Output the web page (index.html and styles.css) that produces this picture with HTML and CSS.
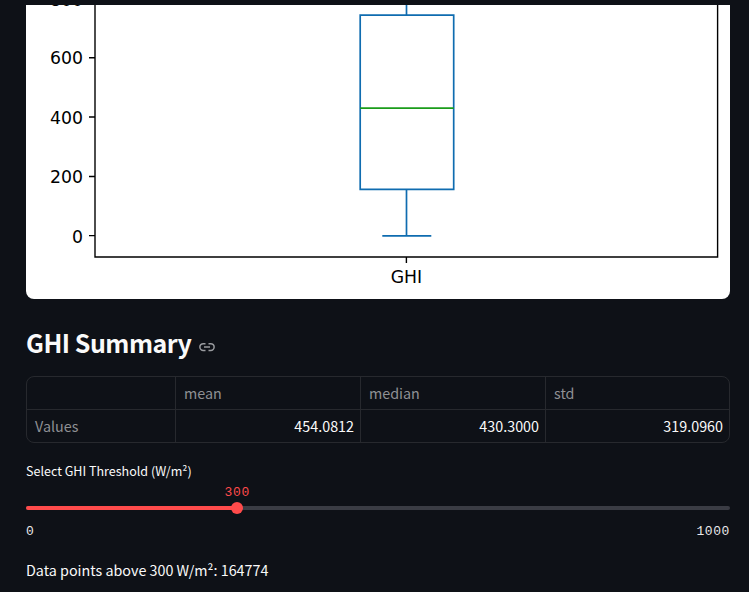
FILE: index.html
```html
<!DOCTYPE html>
<html lang="en">
<head>
<meta charset="utf-8">
<title>GHI Summary</title>
<link rel="stylesheet" href="styles.css">
</head>
<body>
<main class="page">
  <svg class="chart" width="704" height="294" viewBox="26 5 704 294" role="img" aria-label="GHI box plot">
    <rect class="paper" x="26" y="5" width="704" height="294"/>
    <g class="axes">
      <path d="M95 0V257H717.6V0"/>
      <path d="M89 57.7h6M89 117h6M89 176.5h6M89 235.6h6M406.4 257v6"/>
    </g>
    <g class="tick">
      <text x="83" y="5.6">800</text>
      <text x="83" y="64.3">600</text>
      <text x="83" y="123.8">400</text>
      <text x="83" y="183">200</text>
      <text x="83" y="242.5">0</text>
      <text class="category" x="406.4" y="283">GHI</text>
    </g>
    <path class="box" d="M406.5 0V15.2M360.2 15.2H453.7V189.3H360.2ZM406.5 189.3V235.8M382.3 235.8H431.3"/>
    <path class="middle" d="M360.2 108.2H453.7"/>
  </svg>

  <h2 class="title"><span>GHI Summary</span>
    <svg class="link" width="18" height="18" viewBox="0 0 24 24"><path d="M14 7.5h3a4.5 4.5 0 0 1 0 9h-3m-4 0H7a4.5 4.5 0 0 1 0-9h3M8 12h8"/></svg>
  </h2>

  <div class="table">
    <div class="cell"></div><div class="cell">mean</div><div class="cell">median</div><div class="cell">std</div>
    <div class="cell">Values</div><div class="cell value">454.0812</div><div class="cell value">430.3000</div><div class="cell value">319.0960</div>
  </div>

  <p class="label">Select GHI Threshold (W/m²)</p>
  <div class="slider">
    <div class="track"><div class="fill"></div><div class="thumb"><span class="current">300</span></div></div>
    <div class="range"><span>0</span><span>1000</span></div>
  </div>
  <p class="result">Data points above 300 W/m²: 164774</p>
</main>
</body>
</html>
```
FILE: styles.css
```css
* { box-sizing: border-box; }
body {
  margin: 0;
  height: 592px;
  overflow: hidden;
  background: #0e1117;
  color: #fafafa;
  font-family: "Noto Sans CJK SC", "Noto Sans", sans-serif;
}
.page { padding: 5px 19px 0 26px; }
.chart { display: block; border-radius: 0 0 8px 8px; }
.paper { fill: #fff; }
.axes { fill: none; stroke: #000; stroke-width: 1.4; }
.tick { font: 17.3px "DejaVu Sans", sans-serif; text-anchor: end; fill: #000; }
.category { text-anchor: middle; }
.box { fill: none; stroke: #0f6cb0; stroke-width: 1.7; }
.middle { fill: none; stroke: #1a9c1a; stroke-width: 1.7; }
.title {
  display: flex;
  align-items: center;
  gap: 7px;
  height: 34px;
  margin: 26px 0 17px;
  font-size: 25px;
  font-weight: 600;
  line-height: 34px;
  letter-spacing: -0.5px;
}
.link { margin-top: 10px; fill: none; stroke: #9a9ca0; stroke-width: 2; }
.table {
  display: grid;
  grid-template-columns: 149px 185px 185px 1fr;
  grid-template-rows: 33px 32px;
  width: 704px;
  border: 1px solid #27292e;
  border-radius: 8px;
  font-size: 14.33px;
}
.cell {
  padding: 0 8px;
  border-right: 1px solid #27292e;
  line-height: 31px;
  color: #8e9094;
}
.cell:nth-child(-n+4) { border-bottom: 1px solid #27292e; }
.cell:nth-child(4n) { border-right: 0; }
.value { padding-right: 6px; color: #fafafa; text-align: right; }
.label { margin: 18px 0 0; height: 20px; font-size: 12.54px; line-height: 20px; }
.slider { margin-top: 25px; font: 13px/20px "Liberation Mono", monospace; letter-spacing: 0.6px; }
.track { position: relative; height: 4px; border-radius: 2px; background: #3a3c44; }
.fill { width: 30%; height: 4px; border-radius: 2px; background: #ff4b4b; }
.thumb {
  position: absolute;
  top: -4px;
  left: calc(30% - 6px);
  width: 12px;
  height: 12px;
  border-radius: 50%;
  background: #ff4b4b;
}
.current { position: absolute; left: 50%; bottom: 11px; transform: translateX(-50%); color: #ff4b4b; }
.range { display: flex; justify-content: space-between; margin-top: 12px; color: #e8e8e9; }
.result { margin: 16px 0 0; font-size: 14.33px; line-height: 24px; }
```
